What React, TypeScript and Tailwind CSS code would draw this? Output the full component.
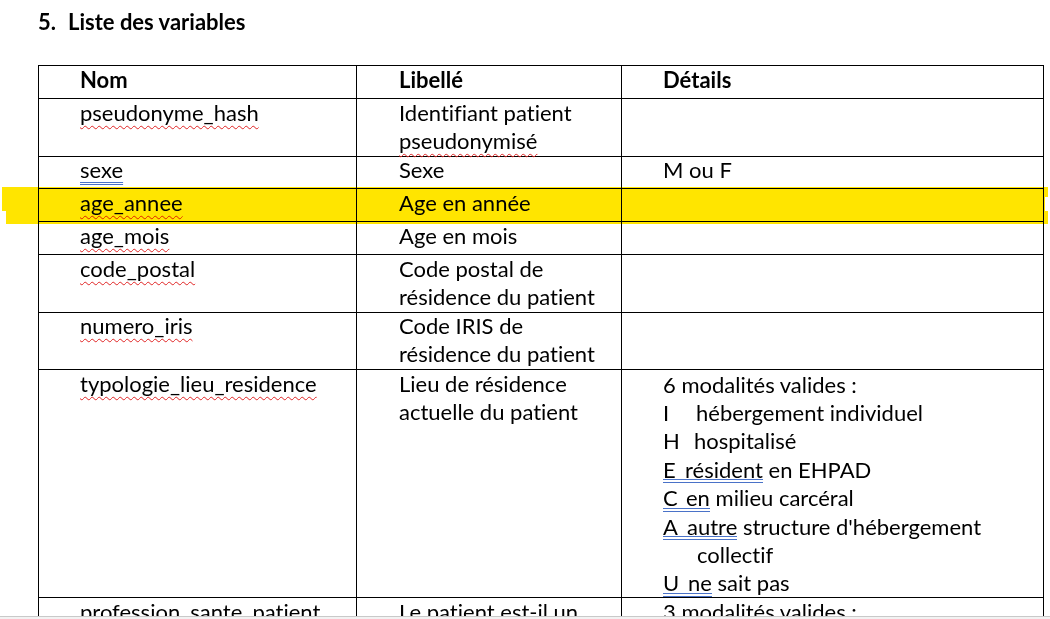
import React from 'react';

const Wavy = ({ children }: { children: React.ReactNode }) => (
  <span className="underline decoration-wavy decoration-[#e02424] decoration-1 underline-offset-[4px]">{children}</span>
);

// Word's blue double underline (grammar check)
const Dbl = ({ children }: { children: React.ReactNode }) => (
  <span className="relative inline-block">
    {children}
    <span className="absolute left-0 right-0 top-[24px] h-[4px] border-y border-[#4a72c8]" />
  </span>
);

function Row({ h, a, b, c }: { h: string; a?: React.ReactNode; b?: React.ReactNode; c?: React.ReactNode }) {
  return (
    <div className={`grid grid-cols-[318px_265px_422px] ${h}`}>
      <div className="border-r border-b border-black pl-[41px]">{a}</div>
      <div className="border-r border-b border-black pl-[42px]">{b}</div>
      <div className="border-r border-b border-black pl-[41px]">{c}</div>
    </div>
  );
}

// code letter + tab-like gap, w = distance to the text start
const Code = ({ l, w }: { l: string; w: string }) => <span className={`inline-block ${w}`}>{l}</span>;

export default function App() {
  return (
    <div className="relative w-[1050px] h-[619px] overflow-hidden bg-white text-black font-[Lato,sans-serif] [font-variant-ligatures:none]">
      <div className="h-[616px] overflow-hidden">
        {/* Heading */}
        <div className="pt-[8px] pl-[38px] flex text-[22px] leading-[28px] font-bold">
          <span className="w-[30px]">5.</span>
          <span>Liste des variables</span>
        </div>

        {/* Table */}
        <div className="mt-[29px] ml-[38px] w-[1006px] border-l border-t border-black text-[22px] leading-[28.4px]">
          <Row h="h-[33px]" a={<b>Nom</b>} b={<b>Libellé</b>} c={<b>Détails</b>} />
          <Row
            h="h-[57px]"
            a={<Wavy>pseudonyme_hash</Wavy>}
            b={<>Identifiant patient<br /><Wavy>pseudonymisé</Wavy></>}
          />
          <Row
            h="h-[33px]"
            a={<span className="underline decoration-double decoration-[#4a72c8] decoration-1 underline-offset-[4px]">sexe</span>}
            b="Sexe"
            c="M ou F"
          />
          <Row h="h-[33px]" a={<Wavy>age_annee</Wavy>} b="Age en année" />
          <Row h="h-[33px]" a={<Wavy>age_mois</Wavy>} b="Age en mois" />
          <Row h="h-[57px]" a={<Wavy>code_postal</Wavy>} b={<>Code postal de<br />résidence du patient</>} />
          <Row h="h-[58px]" a={<Wavy>numero_iris</Wavy>} b={<>Code IRIS de<br />résidence du patient</>} />
          <Row
            h="h-[228px]"
            a={<Wavy>typologie_lieu_residence</Wavy>}
            b={<>Lieu de résidence<br />actuelle du patient</>}
            c={
              <div className="flex flex-col">
                <span className="leading-[29px]">6 modalités valides :</span>
                <span className="leading-[28px]"><Code l="I" w="w-[33px]" />hébergement individuel</span>
                <span className="leading-[28px]"><Code l="H" w="w-[31px]" />hospitalisé</span>
                <span className="leading-[29px]"><Dbl><Code l="E" w="w-[22px]" />résident</Dbl> en EHPAD</span>
                <span className="leading-[28px]"><Dbl><Code l="C" w="w-[23px]" />en</Dbl> milieu carcéral</span>
                <span className="leading-[29px]"><Dbl><Code l="A" w="w-[24px]" />autre</Dbl> structure d'hébergement</span>
                <span className="leading-[28px] pl-[34px]">collectif</span>
                <span className="leading-[28px]"><Dbl><Code l="U" w="w-[25px]" />ne</Dbl> sait pas</span>
              </div>
            }
          />
          <Row
            h="h-[60px]"
            a={<Wavy>profession_sante_patient</Wavy>}
            b="Le patient est-il un"
            c="3 modalités valides :"
          />
        </div>
      </div>
      <div className="h-px bg-[#c9c9c9]" />
      <div className="h-[2px] bg-[#f2f2f2]" />

      {/* Yellow marker stroke over the age_annee row */}
      <div className="absolute left-[2px] top-[187px] w-[1046px] h-[10px] bg-[#ffe500] mix-blend-multiply" />
      <div className="absolute left-[2px] top-[197px] w-[1043px] h-[14px] bg-[#ffe500] mix-blend-multiply" />
      <div className="absolute left-[6px] top-[211px] w-[1042px] h-[13px] bg-[#ffe500] mix-blend-multiply" />
    </div>
  );
}
